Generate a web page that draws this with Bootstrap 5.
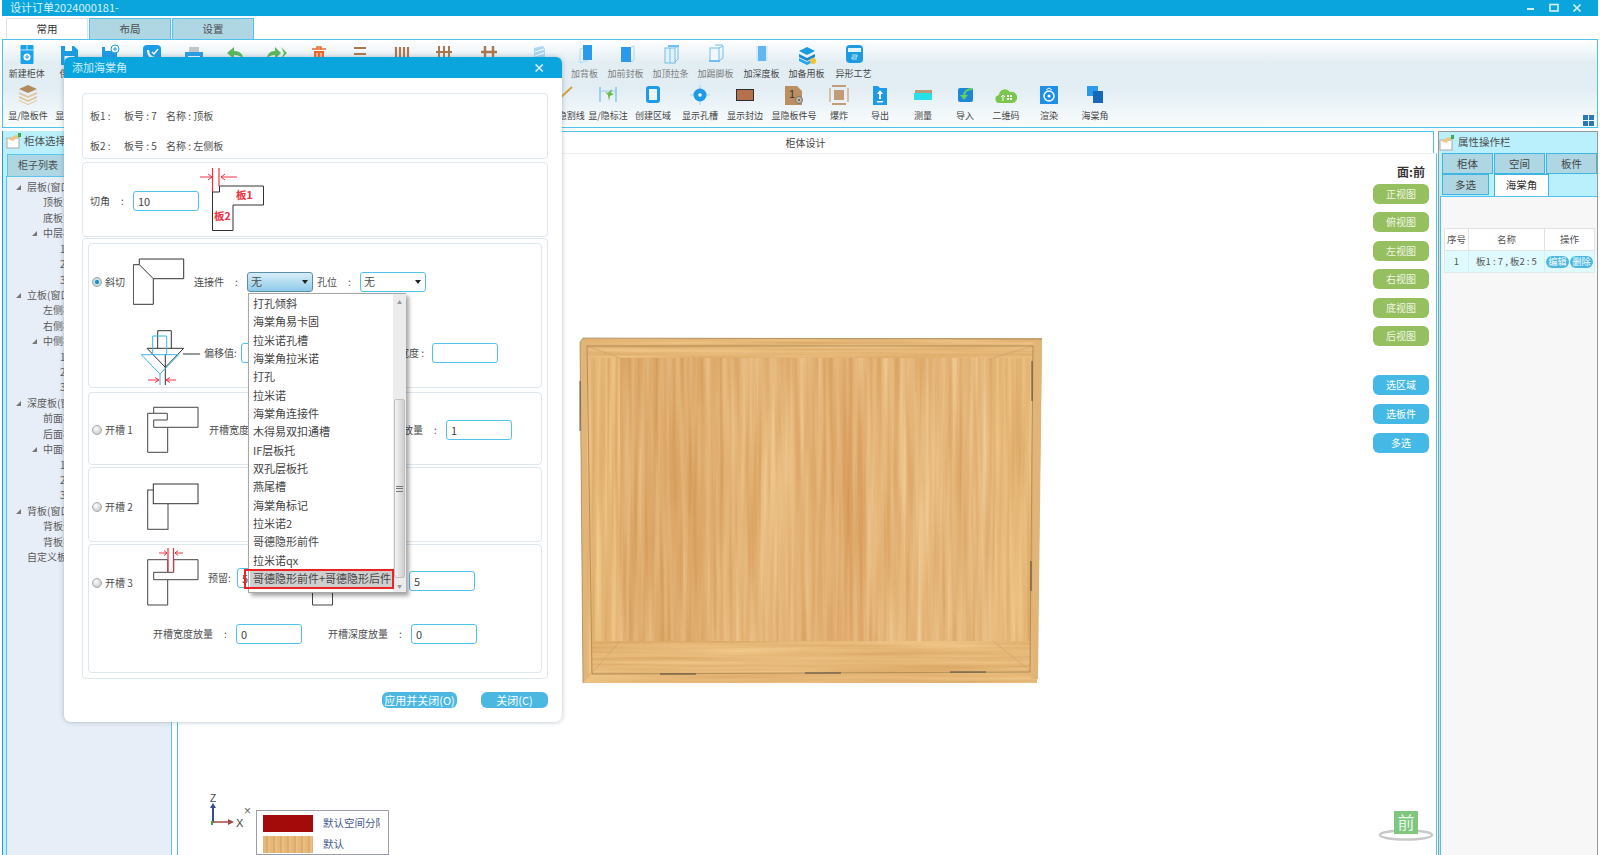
<!DOCTYPE html>
<html lang="zh-CN">
<head>
<meta charset="UTF-8">
<title>设计订单2024000181-</title>
<link rel="stylesheet" href="https://cdn.jsdelivr.net/npm/bootstrap@5.3.0/dist/css/bootstrap.min.css">
<script src="https://cdn.jsdelivr.net/npm/bootstrap@5.3.0/dist/js/bootstrap.bundle.min.js"></script>
<style>
body { width:1600px; height:855px; overflow:hidden; background:#fff; padding:0 2px; position:relative;
  font-family:"Noto Sans CJK SC","Liberation Sans",sans-serif; font-size:10px; color:#4d4d4d; line-height:1.2; }
/* title bar */
.title-bar { height:16px; background:#0aa5dc; color:#d8f2fb; font-size:11px; padding:0 16px 0 8px; }
.win-btns { gap:13px; }
/* ribbon tabs */
.main-tabs { height:23px; padding:2px 0 0 4px; border:0; gap:1px; flex-wrap:nowrap; }
.main-tabs .nav-link { width:82px; height:22px; padding:0; margin:0; font-size:10.5px; line-height:20px; text-align:center; color:#4d4d4d;
  background:#aed6e3; border:1px solid #4fc3ee; border-bottom:0; border-radius:0; }
.main-tabs .nav-link.active { background:#fff; color:#333; }
/* ribbon */
.ribbon { height:89px; border:1px solid #4fc3ee; padding-left:3px; position:relative;
  background:linear-gradient(#fff 0,#e3eef3 25%,#e2edf4 55%,#fafdfe 100%); }
.rib-row { height:42px; }
.rib-item { flex:none; display:flex; flex-direction:column; align-items:center; white-space:nowrap; font-size:9px; line-height:12px; color:#444; }
.rib-row1 .rib-item { padding-top:4px; }
.rib-row1 .rib-ttl { margin-top:2px; }
.rib-row2 .rib-item { padding-top:2px; }
.rib-row2 .rib-ttl { margin-top:4px; }
.rib-ico { width:22px; height:22px; flex:none; }
.faded { color:#7c7c7c; }
.rw36{width:36px}.rw38{width:38px}.rw40{width:40px}.rw417{width:41.7px}.rw42{width:42px}.rw44{width:44px}.rw46{width:46px}
.rw48{width:48px}.rw50{width:50px}.rw52{width:52px}.rw54{width:54px}.rib-spacer{width:443px;flex:none}
.rib-corner { position:absolute; right:3px; bottom:1px; width:11px; height:11px; }
/* panes */
.main-row { height:724px; margin-top:3px; }
.left-pane { width:170px; flex:none; background:#b9f0fb; border-left:1px solid #3d8fc9; display:flex; flex-direction:column; }
.pane-head { height:20px; padding-left:3px; gap:2px; font-size:10.5px; color:#4d4d4d; flex:none; }
.pane-ico { width:16px; height:16px; }
.left-tab { height:22px; width:62px; margin:3px 0 0 4px; background:#aed6e3; border:1px solid #5cc6ee; border-bottom:0; line-height:20px; text-align:center; font-size:10px; flex:none; }
.tree { flex:1; margin-left:3px; background:#e8eef7; border:1px solid #5cc6ee; border-bottom:0; padding-top:2px; overflow:hidden; }
.tree-row { height:15.43px; line-height:15.43px; font-size:10px; color:#5a5a5a; white-space:nowrap; }
.lv0 { padding-left:20px; } .lv1 { padding-left:36px; } .lv2 { padding-left:53px; } .lv-c { padding-left:9px; } .lv1c { padding-left:25px; }
.tree-tri { display:inline-block; width:0; height:0; border-left:5px solid transparent; border-bottom:5px solid #777; margin-right:6px; vertical-align:1px; }
.center-pane { width:1260px; flex:none; margin-left:5px; display:flex; flex-direction:column; }
.cv-tab { height:22px; flex:none; width:1257px; border:1px solid #4fc3ee; border-bottom:0; text-align:center; font-size:10px; line-height:21px; color:#444; }
.cv-body { flex:1; display:flex; border-left:1px solid #4fc3ee; border-right:1px solid #4fc3ee; border-top:1px solid #f0f0f0; }
.canvas-area { flex:1; position:relative; }
.wood-svg { position:absolute; left:400px; top:177px; width:470px; height:360px; }
.axis-svg { position:absolute; left:27px; top:636px; width:80px; height:45px; }
.legend-box { position:absolute; left:78px; top:656px; width:133px; height:45px; border:1px solid #9a9eab; background:#fff; padding:3px 6px; overflow:hidden; font-size:10.5px; color:#44598f; white-space:nowrap; }
.legend-row { height:18px; margin-bottom:3px; gap:10px; }
.legend-txt { width:57px; overflow:hidden; flex:none; }
.swatch { width:50px; height:17px; flex:none; }
.swatch-red { background:#a30b0b; }
.swatch-wood { background:repeating-linear-gradient(90deg,#e6b878 0 3px,#dfab6c 3px 5px,#e8bf84 5px 7px); }
.face-svg { position:absolute; left:1200px; top:654px; width:60px; height:34px; }
.view-col { width:63px; flex:none; padding:10px 7px 0 0; display:flex; flex-direction:column; align-items:stretch; }
.face-lbl { font-size:12px; font-weight:700; color:#333; text-align:right; padding-right:4px; margin-bottom:4px; line-height:16px; }
.vbtn { height:20px; padding:0; margin-bottom:8.4px; border:0; border-radius:6px; color:#eef6e4; font-size:10px; line-height:20px; flex:none; }
.vbtn-g { background:#96bf60; }
.vbtn-b { background:#45b9e5; color:#fff; margin-bottom:9px; }
.vgap { margin-top:21px; }
.right-pane { width:160px; flex:none; margin-left:1px; background:#b9f0fb; border:1px solid #999; border-bottom:0; display:flex; flex-direction:column; }
.rt-head { height:21px; padding-left:0; gap:3px; font-size:10.5px; flex:none; }
.rt-tabs { height:21px; margin-left:3px; flex:none; flex-wrap:nowrap; gap:1px; }
.rt-tabs .nav-link { height:21px; padding:0; font-size:10.5px; line-height:19px; text-align:center; color:#444; background:#aed6e3; border:1px solid #3fb5e3; border-radius:0; }
.rt-t51 { width:51px; } .rt-t47 { width:47px; margin-right:4px; } .rt-t55 { width:55px; }
.rt-tabs .nav-link.active { background:#fff; border-bottom:0; height:23px; color:#333; }
.rt-tabs2 { height:22px; }
.rt-body { flex:1; background:#f7f7f7; border:1px solid #4fc3ee; border-right:0; border-bottom:0; margin-left:1px; padding:31px 3px 0 3px; }
.prop-table { width:150px; margin:0; font-size:9.5px; table-layout:fixed; --bs-table-bg:transparent; }
.prop-table th, .prop-table td { padding:0; height:22px; text-align:center; vertical-align:middle; font-weight:400; color:#555; border:1px solid #e3e3e3; white-space:nowrap; }
.prop-table th { background:#fff; }
.prop-table td { background:#e0fbff; border-color:#dcebec; }
.col-a { width:24px; } .col-b { width:76px; } .col-c { width:50px; }
.pill-row { gap:1px; }
.pill-btn { height:12px; width:23px; padding:0; border:0; border-radius:6px; background:#4bb8e2; color:#fff; font-size:9px; line-height:12px; }
/* dialog */
.dlg { position:absolute; left:64px; top:57px; width:498px; height:665px; background:#fff; border-radius:7px; box-shadow:0 0 5px rgba(90,110,130,.45); z-index:5; }
.dlg-head { height:21px; background:#0aa5dc; color:#cfeefa; border-radius:6px 6px 0 0; padding:0 17px 0 8px; font-size:11px; }
.dlg-x { font-size:12px; line-height:12px; font-weight:700; color:#eaf8fd; }
.dlg-body { padding:15px 14px 0 18px; }
.sec { border:1px solid #dde7ee; border-radius:4px; }
.sec-info { height:66px; padding:7px 0 0 7px; margin-bottom:3px; }
.info-line { height:30px; line-height:30px; font-size:10px; }
.info-a { width:34px; } .info-b { width:42px; }
.sec-cut { height:75px; margin-bottom:1px; padding-left:7px; }
.cut-field { padding-top:3px; }
.cut-svg { width:66px; height:70px; margin-left:1px; }
.sec-modes { height:441px; padding:4px 5px 0 5px; }
.opt { border:1px solid #dde7ee; border-radius:4px; }
.opt1 { height:145px; margin-bottom:4px; padding-top:14px; }
.opt2 { height:73px; margin-bottom:2px; padding-top:3px; }
.opt3 { height:75px; margin-bottom:2px; padding-top:5px; }
.opt4 { height:129px; padding-top:1px; }
.opt-radio { flex:none; padding-left:3px; gap:3px; white-space:nowrap; font-size:10px; margin:0; }
.opt-a { width:44px; } .opt-b { width:58px; }
.opt-shift { margin-top:31px; align-self:flex-start; }
.radio-dot { width:10px; height:10px; margin:0; flex:none; float:none; border:1px solid #aaa; background:radial-gradient(circle at 40% 35%,#fff,#cfcfcf 70%,#b5b5b5); }
.radio-dot:checked { background-image:none; background:radial-gradient(circle,#1c8fc4 0 28%,#cfe2ea 45%,#aab6bc 100%); border-color:#9aa; }
.f-colon { width:3px; margin:0 9px 0 11px; flex:none; }
.f-input { width:66px; height:20px; flex:none; padding:0 4px; border:1px solid #4fc3ee; border-radius:3px; font-size:11px; font-family:inherit; color:#444; line-height:18px; min-height:0; }
.combo { width:66px; height:20px; flex:none; padding:0 4px 0 3px; border:1px solid #4fc3ee; border-radius:3px; background:#fff; font-size:11px; }
.combo-open { background:linear-gradient(#d7edf8,#8fcbe9); border-color:#5a8fa8; }
.combo-caret { width:0; height:0; border-left:3.5px solid transparent; border-right:3.5px solid transparent; border-top:4px solid #222; }
.mode-a { width:52px; height:47px; margin-left:0; flex:none; }
.mode-b { width:53px; height:50px; flex:none; }
.mode-c { width:53px; height:48px; flex:none; }
.mode-d { width:53px; height:60px; flex:none; }
.ml-9 { margin-left:9px; } .ml-4 { margin-left:4px; }
.row-b { margin-top:23px; padding-left:52px; }
.off-svg { width:60px; height:58px; flex:none; }
.off-field { margin-top:15px; align-self:flex-start; }
.off-lbl { margin-left:3px; width:37px; flex:none; }
.off-deg { margin-left:77px; width:40px; flex:none; }
.ml-94 { margin-left:94px; }
.field-3 { margin-left:8px; margin-top:22px; align-self:flex-start; }
.lbl-res { width:29px; flex:none; }
.small-d { width:21px; height:15px; margin:45px 0 0 9px; flex:none; align-self:flex-start; }
.input-5 { margin:25px 0 0 76px; align-self:flex-start; }
.row-c { margin-top:18px; padding-left:64px; }
.ml-26 { margin-left:26px; }
.dlg-foot { padding:13px 0 0 0; gap:24px; }
.dlg-btn { height:16px; padding:0; border:0; border-radius:6px; background:#4bb8e2; color:#fff; font-size:11px; line-height:16px; }
.btn-apply { width:75px; } .btn-close-c { width:67px; }
/* dropdown */
.combo-list.dropdown-menu { position:absolute; left:184px; top:236px; width:158px; height:300px; min-width:0; padding:0 0 0 1px; margin:0; border:1px solid #a7a7a7; border-radius:0; background:#fff; box-shadow:3px 3px 4px rgba(0,0,0,.35); display:flex; font-size:11px; z-index:8; }
.combo-items { width:143px; flex:none; }
.combo-items .dropdown-item { height:18.33px; line-height:18.33px; padding:0 0 0 3px; font-size:11px; color:#444; white-space:nowrap; position:relative; }
.combo-items .dropdown-item.picked { background:#cfcfcf; }
.pick-box { position:absolute; left:-6px; top:0; width:150px; height:20px; border:2px solid #ee2222; }
.combo-scroll { width:13px; flex:none; background:#ececec; display:flex; flex-direction:column; align-items:center; }
.sc-arrow { height:16px; flex:none; font-size:5px; line-height:16px; color:#999; }
.sc-space { height:89px; flex:none; }
.sc-thumb { width:11px; height:179px; flex:none; border:1px solid #c0c0c0; border-radius:2px; background:linear-gradient(90deg,#f4f4f4,#cdcdcd); display:flex; align-items:center; justify-content:center; }
.sc-grip { width:7px; height:6px; border-top:1px solid #777; border-bottom:1px solid #777; position:relative; }
.sc-grip::after { content:""; position:absolute; left:0; right:0; top:1.5px; height:1px; background:#777; }
</style>
</head>
<body>

<svg width="0" height="0" class="position-absolute">
  <defs>
    <filter id="grainV" x="0" y="0" width="100%" height="100%" color-interpolation-filters="sRGB">
      <feTurbulence type="fractalNoise" baseFrequency="0.17 0.005" numOctaves="3" seed="11"/>
      <feColorMatrix type="matrix" values="0.14 0 0 0 0.82  0.24 0 0 0 0.58  0.3 0 0 0 0.31  0 0 0 0 1"/>
    </filter>
    <filter id="grainH" x="0" y="0" width="100%" height="100%" color-interpolation-filters="sRGB">
      <feTurbulence type="fractalNoise" baseFrequency="0.006 0.25" numOctaves="2" seed="4"/>
      <feColorMatrix type="matrix" values="0.12 0 0 0 0.84  0.18 0 0 0 0.63  0.2 0 0 0 0.37  0 0 0 0 1"/>
    </filter>
    <filter id="grainS" x="0" y="0" width="100%" height="100%" color-interpolation-filters="sRGB">
      <feTurbulence type="fractalNoise" baseFrequency="0.25 0.006" numOctaves="2" seed="8"/>
      <feColorMatrix type="matrix" values="0.12 0 0 0 0.84  0.18 0 0 0 0.63  0.2 0 0 0 0.37  0 0 0 0 1"/>
    </filter>
    <linearGradient id="woodBands" x1="0" x2="1" y1="0" y2="0">
      <stop offset="0" stop-color="#b97a35" stop-opacity=".12"/>
      <stop offset=".2" stop-color="#c07a35" stop-opacity=".12"/>
      <stop offset=".38" stop-color="#fff0c0" stop-opacity=".06"/>
      <stop offset=".62" stop-color="#c8783a" stop-opacity=".14"/>
      <stop offset=".72" stop-color="#ffe9b8" stop-opacity=".06"/>
      <stop offset="1" stop-color="#ffeec6" stop-opacity=".08"/>
    </linearGradient>
  </defs>
</svg>

<div class="title-bar d-flex justify-content-between align-items-center">
  <span>设计订单2024000181-</span>
  <div class="win-btns d-flex align-items-center">
    <svg width="10" height="10" viewBox="0 0 10 10"><path d="M1 6h7" stroke="#d8f2fb" stroke-width="2"/></svg>
    <svg width="10" height="10" viewBox="0 0 10 10"><rect x="1" y="1.5" width="8" height="6.5" fill="none" stroke="#d8f2fb" stroke-width="1.6"/></svg>
    <svg width="10" height="10" viewBox="0 0 10 10"><path d="M1.5 1.5l7 7M8.5 1.5l-7 7" stroke="#d8f2fb" stroke-width="1.6"/></svg>
  </div>
</div>

<ul class="nav nav-tabs main-tabs">
  <li class="nav-item"><a class="nav-link active" href="#">常用</a></li>
  <li class="nav-item"><a class="nav-link" href="#">布局</a></li>
  <li class="nav-item"><a class="nav-link" href="#">设置</a></li>
</ul>

<div class="ribbon">
  <div class="rib-row rib-row1 d-flex">
    <div class="rib-item rw417"><svg class="rib-ico" viewBox="0 0 22 22"><rect x="4.500" y="1" width="13" height="19" rx="1" fill="#18a2ea"/><path d="M4.500 6h13M11 1v5" stroke="#fff" stroke-width=".7"/><circle cx="11" cy="13" r="3.500" fill="#fff"/><path d="M9 13h4M11 11v4" stroke="#18a2ea"/></svg><span class="rib-ttl">新建柜体</span></div>
    <div class="rib-item rw417"><svg class="rib-ico" viewBox="0 0 22 22"><path d="M3 2h13l4 4v15H3z" fill="#1a9de6"/><rect x="7" y="2" width="7" height="5" fill="#fff"/><rect x="6.500" y="12" width="10" height="9" fill="#fff"/></svg><span class="rib-ttl">保存</span></div>
    <div class="rib-item rw417"><svg class="rib-ico" viewBox="0 0 22 22"><path d="M3 3h11l4 4v14H3z" fill="#1a9de6"/><rect x="6" y="3" width="6" height="4" fill="#fff"/><rect x="6" y="13" width="9" height="8" fill="#fff"/><circle cx="16" cy="5" r="4" fill="#fff" stroke="#1a9de6"/><path d="M14 5h4M16 3v4" stroke="#1a9de6"/></svg></div>
    <div class="rib-item rw417"><svg class="rib-ico" viewBox="0 0 22 22"><rect x="2" y="1" width="18" height="18" rx="4" fill="#1a9de6"/><path d="M7 6c0 5 3 8 8 8" stroke="#fff" stroke-width="2.200" fill="none"/><path d="M11 8l2 2 4-5" stroke="#fff" stroke-width="1.500" fill="none"/></svg></div>
    <div class="rib-item rw417"><svg class="rib-ico" viewBox="0 0 22 22"><rect x="6" y="3" width="10" height="5" fill="#c3c6c8"/><rect x="2" y="8" width="18" height="9" fill="#2a9fe6"/><rect x="5" y="12" width="12" height="2" fill="#fff"/></svg></div>
    <div class="rib-item rw417"><svg class="rib-ico" viewBox="0 0 22 22"><path d="M3 9l7-6v4c6 0 9 3 9 8-2-3-5-4-9-4v4z" fill="#5bb85c"/></svg></div>
    <div class="rib-item rw417"><svg class="rib-ico" viewBox="0 0 22 22"><path d="M15 9L9 3v4C4 7 1 10 1 15c2-3 4-4 8-4v4z" fill="#5bb85c"/><path d="M15 3l6 6-6 6 3-6z" fill="#5bb85c"/></svg></div>
    <div class="rib-item rw417"><svg class="rib-ico" viewBox="0 0 22 22"><path d="M6 7h10v12H6z" fill="#ea6a2c"/><path d="M4 5h14M9 5V3h4v2" stroke="#ea6a2c" stroke-width="1.500" fill="none"/><path d="M9 9v8M13 9v8" stroke="#fff"/></svg></div>
    <div class="rib-item rw417"><svg class="rib-ico" viewBox="0 0 22 22"><path d="M5 4h12M5 10h12M5 16h12" stroke="#a8784f" stroke-width="2.200"/></svg></div>
    <div class="rib-item rw417"><svg class="rib-ico" viewBox="0 0 22 22"><path d="M5 3v15M9 3v15M13 3v15M17 3v15" stroke="#a8784f" stroke-width="2.200"/></svg></div>
    <div class="rib-item rw417"><svg class="rib-ico" viewBox="0 0 22 22"><path d="M6 2v18M11 2v18M16 2v18M3 8h16M3 14h16" stroke="#a8784f" stroke-width="2"/></svg></div>
    <div class="rib-item rw48"><svg class="rib-ico" viewBox="0 0 22 22"><path d="M7 2v18M15 2v18M3 8h16" stroke="#a8784f" stroke-width="2.400"/></svg></div>
    <div class="rib-item rw52"><svg class="rib-ico" viewBox="0 0 22 22"><path d="M6 4l9-2 2 3v12l-9 3-2-3z" fill="#a9d8f5"/><path d="M7 8l9-3M7 12l9-3" stroke="#fff"/></svg></div>
    <div class="rib-item rw40"><svg class="rib-ico" viewBox="0 0 22 22"><path d="M6 5l8-3v14l-8 3z" fill="none" stroke="#a9d8f5"/><rect x="9" y="1" width="9" height="15" fill="#2c9aea"/></svg><span class="rib-ttl faded">加背板</span></div>
    <div class="rib-item rw42"><svg class="rib-ico" viewBox="0 0 22 22"><rect x="6" y="3" width="10" height="15" fill="#2c9aea"/><path d="M16 3l3-1v14l-3 2" fill="none" stroke="#a9d8f5"/></svg><span class="rib-ttl faded">加前封板</span></div>
    <div class="rib-item rw48"><svg class="rib-ico" viewBox="0 0 22 22"><rect x="5" y="4" width="10" height="15" fill="#e3f3fd" stroke="#72bef0"/><path d="M15 4l3-2v13l-3 3" fill="none" stroke="#72bef0"/><rect x="8" y="1" width="11" height="2" fill="#72bef0"/><path d="M10 4v15" stroke="#72bef0"/></svg><span class="rib-ttl faded">加顶拉条</span></div>
    <div class="rib-item rw42"><svg class="rib-ico" viewBox="0 0 22 22"><rect x="5" y="4" width="9" height="13" fill="#f0f8fe" stroke="#72bef0"/><path d="M14 4l4-2v12l-4 3M10 1h8" fill="none" stroke="#72bef0"/><rect x="4" y="16" width="11" height="2" fill="#72bef0"/></svg><span class="rib-ttl faded">加踢脚板</span></div>
    <div class="rib-item rw50"><svg class="rib-ico" viewBox="0 0 22 22"><rect x="7" y="2" width="8" height="15" fill="#62b7f2"/><path d="M6 2v15M16 2v15" stroke="#bfe2f8"/></svg><span class="rib-ttl">加深度板</span></div>
    <div class="rib-item rw40"><svg class="rib-ico" viewBox="0 0 22 22"><path d="M11 3l8 4-8 4-8-4z" fill="#1c9ae2"/><path d="M3 10l8 4 8-4v3l-8 4-8-4z" fill="#1487cf"/><path d="M3 14l8 4 6-3v3l-6 3-8-4z" fill="#21a7ea"/><circle cx="17" cy="17" r="3" fill="#f2c232"/></svg><span class="rib-ttl">加备用板</span></div>
    <div class="rib-item rw54"><svg class="rib-ico" viewBox="0 0 22 22"><rect x="3" y="1" width="17" height="18" rx="4" fill="#1c9ae2"/><rect x="5" y="4" width="13" height="4" fill="#e3f4fd"/><path d="M9 11h5v2H9v2h5" stroke="#bfe6fa" fill="none"/></svg><span class="rib-ttl">异形工艺</span></div>
  </div>
  <div class="rib-row rib-row2 d-flex">
    <div class="rib-item rw44"><svg class="rib-ico" viewBox="0 0 22 22"><path d="M11 1l9 4-9 4-9-4z" fill="#b38a5e"/><path d="M2 8l9 4 9-4v2l-9 4-9-4zM2 12l9 4 9-4v2l-9 4-9-4zM2 16l9 4 9-4v1l-9 4-9-4z" fill="#e2c59c"/></svg><span class="rib-ttl">显/隐板件</span></div>
    <div class="rib-item rw50"><svg class="rib-ico" viewBox="0 0 22 22"><rect x="4" y="4" width="14" height="14" fill="#a9d8f5"/></svg><span class="rib-ttl">显/隐门板</span></div>
    <div class="rib-spacer"></div>
    <div class="rib-item rw44"><svg class="rib-ico" viewBox="0 0 22 22"><path d="M4 16L18 3" stroke="#d9a13c" stroke-width="2"/></svg><span class="rib-ttl">显/隐割线</span></div>
    <div class="rib-item rw42"><svg class="rib-ico" viewBox="0 0 22 22"><path d="M3 3v15M19 3v15" stroke="#4fb4ee"/><path d="M3 7h16" stroke="#8cd0f2"/><path d="M15 5l-4 4-3-1 3 3 1 6 1-5 4-2-3-1z" fill="#66bb45"/></svg><span class="rib-ttl">显/隐标注</span></div>
    <div class="rib-item rw48"><svg class="rib-ico" viewBox="0 0 22 22"><rect x="4" y="2" width="14" height="17" rx="3" fill="#1e9be8"/><rect x="7" y="5" width="8" height="11" fill="#eaf6fd"/></svg><span class="rib-ttl">创建区域</span></div>
    <div class="rib-item rw46"><svg class="rib-ico" viewBox="0 0 22 22"><path d="M1 11h20M11 1v20" stroke="#9fdcf7" stroke-width="1.200"/><circle cx="11" cy="11" r="6.500" fill="#1e9be8"/><circle cx="11" cy="11" r="1.800" fill="#fff"/></svg><span class="rib-ttl">显示孔槽</span></div>
    <div class="rib-item rw44"><svg class="rib-ico" viewBox="0 0 22 22"><rect x="2.500" y="5.500" width="17" height="11" fill="#b5714d" stroke="#2e2e2e"/></svg><span class="rib-ttl">显示封边</span></div>
    <div class="rib-item rw54"><svg class="rib-ico" viewBox="0 0 22 22"><path d="M2 2h12l5 5v14H2z" fill="#bb8f62"/><text x="6" y="14" font-size="11" font-family="Liberation Sans" fill="#333">1</text><circle cx="16" cy="16" r="3.500" fill="#bfb5a8" stroke="#7d7467"/><circle cx="16" cy="16" r="1" fill="#555"/></svg><span class="rib-ttl">显隐板件号</span></div>
    <div class="rib-item rw36"><svg class="rib-ico" viewBox="0 0 22 22"><rect x="6" y="6" width="10" height="10" fill="#c29c76"/><path d="M4 1h14v2H4zM4 19h14v2H4z" fill="#c29c76"/><path d="M1 4h2v14H1zM19 4h2v14h-2z" fill="#d6bfa6"/></svg><span class="rib-ttl">爆炸</span></div>
    <div class="rib-item rw46"><svg class="rib-ico" viewBox="0 0 22 22"><path d="M4 2h5l2 2h7v17H4z" fill="#1e9be8"/><path d="M11 6l3 4h-2v5h-2v-5H8zM8 17h6v1.500H8z" fill="#fff"/></svg><span class="rib-ttl">导出</span></div>
    <div class="rib-item rw40"><svg class="rib-ico" viewBox="0 0 22 22"><rect x="3" y="6" width="17" height="3" fill="#b79c7a"/><rect x="2" y="9" width="18" height="7" fill="#28e0ea"/></svg><span class="rib-ttl">测量</span></div>
    <div class="rib-item rw44"><svg class="rib-ico" viewBox="0 0 22 22"><rect x="4" y="4" width="15" height="14" rx="2" fill="#1d86d6"/><path d="M18 5c-5 0-8 3-8 7" stroke="#62d25a" stroke-width="2" fill="none"/><path d="M6 11h8l-4 5z" fill="#62d25a"/></svg><span class="rib-ttl">导入</span></div>
    <div class="rib-item rw38"><svg class="rib-ico" viewBox="0 0 22 22"><path d="M5 19a4 4 0 0 1-1-8 6 6 0 0 1 11-3 5 5 0 0 1 3 11z" fill="#7bc74d"/><path d="M8 17v-6M6 13l2-2 2 2" stroke="#fff" fill="none"/><path d="M12 11h2v2h-2zM15 11h2v2h-2zM12 14h2v2h-2zM15 14h2v2h-2z" fill="#fff"/></svg><span class="rib-ttl">二维码</span></div>
    <div class="rib-item rw48"><svg class="rib-ico" viewBox="0 0 22 22"><rect x="2" y="2" width="18" height="18" fill="#1d8fe6"/><circle cx="11" cy="12" r="5" fill="none" stroke="#fff" stroke-width="1.500"/><path d="M8 6l3-2 3 2" stroke="#fff" fill="none"/><circle cx="11" cy="12" r="1.500" fill="#fff"/></svg><span class="rib-ttl">渲染</span></div>
    <div class="rib-item rw44"><svg class="rib-ico" viewBox="0 0 22 22"><rect x="3" y="2" width="11" height="10" fill="#2a9be8"/><rect x="9" y="7" width="10" height="12" fill="#1668b8"/></svg><span class="rib-ttl">海棠角</span></div>
  </div>
  <svg class="rib-corner" viewBox="0 0 11 11"><path d="M0 0h5v5H0zM6 0h5v5H6zM0 6h5v5H0zM6 6h5v5H6z" fill="#2a78b8"/></svg>
</div>

<div class="main-row d-flex">
  <aside class="left-pane">
    <div class="pane-head d-flex align-items-center">
      <svg class="pane-ico" viewBox="0 0 16 16"><rect x="1" y="5" width="12" height="10" fill="#fff" stroke="#aaa"/><path d="M2 6l8-4 3 1-6 5z" fill="#eec583"/><rect x="12" y="0" width="3" height="4" fill="#3dab48"/></svg>
      <span>柜体选择栏</span>
    </div>
    <div class="left-tab">柜子列表</div>
    <div class="tree">
      <div class="tree-row lv-c"><i class="tree-tri"></i>层板(窗口1)</div>
      <div class="tree-row lv1">顶板*</div>
      <div class="tree-row lv1">底板*</div>
      <div class="tree-row lv1c"><i class="tree-tri"></i>中层板</div>
      <div class="tree-row lv2">1</div>
      <div class="tree-row lv2">2</div>
      <div class="tree-row lv2">3</div>
      <div class="tree-row lv-c"><i class="tree-tri"></i>立板(窗口1)</div>
      <div class="tree-row lv1">左侧板</div>
      <div class="tree-row lv1">右侧板</div>
      <div class="tree-row lv1c"><i class="tree-tri"></i>中侧板</div>
      <div class="tree-row lv2">1</div>
      <div class="tree-row lv2">2</div>
      <div class="tree-row lv2">3</div>
      <div class="tree-row lv-c"><i class="tree-tri"></i>深度板(窗口1)</div>
      <div class="tree-row lv1">前面板</div>
      <div class="tree-row lv1">后面板</div>
      <div class="tree-row lv1c"><i class="tree-tri"></i>中面板</div>
      <div class="tree-row lv2">1</div>
      <div class="tree-row lv2">2</div>
      <div class="tree-row lv2">3</div>
      <div class="tree-row lv-c"><i class="tree-tri"></i>背板(窗口1)</div>
      <div class="tree-row lv1">背板开槽</div>
      <div class="tree-row lv1">背板拉条</div>
      <div class="tree-row lv0">自定义板</div>
    </div>
  </aside>

  <main class="center-pane">
    <div class="cv-tab">柜体设计</div>
    <div class="cv-body">
      <div class="canvas-area">
        <svg class="wood-svg" viewBox="578 330 470 360">
          <polygon points="583,337 1042,338 1037,678 583,682 580,341" fill="#dfb274"/>
          <g filter="url(#grainH)"><polygon points="583,337 1042,338 1042,345 583,345"/></g>
          <g filter="url(#grainH)"><polygon points="583,673 1031,671 1037,678 583,682"/></g>
          <path d="M580 341h7l5 332-9 9zM1033 338h9l-4 340h-7z" fill="#e0b577"/>
          <g filter="url(#grainS)"><polygon points="587,345 620,357 620,640 592,672"/></g>
          <g filter="url(#grainS)"><polygon points="1033,345 993,357 993,640 1030,670"/></g>
          <g filter="url(#grainH)"><polygon points="587,345 1033,345 993,357 620,357"/></g>
          <g filter="url(#grainH)"><polygon points="620,640 993,640 1030,670 592,672"/></g>
          <g filter="url(#grainV)"><rect x="620" y="357" width="373" height="283"/></g>
          <rect x="620" y="357" width="373" height="283" fill="url(#woodBands)"/>
          <path d="M587 345L620 357M1033 345L993 357M592 672L620 640M1030 670L993 640" stroke="#c99d66" stroke-width=".6"/>
          <path d="M587 345H1033L1030 671L592 673Z" fill="none" stroke="#a48556" stroke-width=".8"/>
          <path d="M583 337L1042 338M580 341L583 337M580 341L583 682" stroke="#8d7a5c" stroke-width=".6"/>
          <path d="M660 673h36M805 672h36M950 671h36M1032 360v40M1031 560v30M580 380v50" stroke="#333" stroke-width=".8"/>
        </svg>
        <svg class="axis-svg" viewBox="205 789 80 45">
          <text x="210" y="801" font-size="10" fill="#444" font-family="Liberation Sans">Z</text>
          <path d="M213 822V805" stroke="#3a4a9c" stroke-width="2"/><path d="M210 807l3-5 3 5z" fill="#3a4a9c"/>
          <path d="M213 821h17" stroke="#a24a48" stroke-width="1.500"/><path d="M228 818l6 3-6 3z" fill="#a24a48"/>
          <path d="M212 820v4" stroke="#3fa44a" stroke-width="2"/>
          <text x="236" y="826" font-size="11" fill="#444" font-family="Liberation Sans">X</text>
          <text x="244" y="814" font-size="12" fill="#666" font-family="Liberation Sans">×</text>
        </svg>
        <div class="legend-box">
          <div class="legend-row d-flex align-items-center"><span class="swatch swatch-red"></span><span class="legend-txt">默认空间分隔</span></div>
          <div class="legend-row d-flex align-items-center"><span class="swatch swatch-wood"></span><span>默认</span></div>
        </div>
        <svg class="face-svg" viewBox="0 0 60 34">
          <ellipse cx="28" cy="27" rx="26" ry="4.500" fill="none" stroke="#c9c9c9" stroke-width="2.500"/>
          <rect x="16" y="3" width="24" height="23" fill="#7fc67f"/>
          <text x="28" y="21" text-anchor="middle" font-size="17" fill="#e8f6e8" font-family="Noto Sans CJK SC">前</text>
        </svg>
      </div>
      <div class="view-col">
        <div class="face-lbl">面:前</div>
        <button class="btn vbtn vbtn-g">正视图</button>
        <button class="btn vbtn vbtn-g">俯视图</button>
        <button class="btn vbtn vbtn-g">左视图</button>
        <button class="btn vbtn vbtn-g">右视图</button>
        <button class="btn vbtn vbtn-g">底视图</button>
        <button class="btn vbtn vbtn-g">后视图</button>
        <button class="btn vbtn vbtn-b vgap">选区域</button>
        <button class="btn vbtn vbtn-b">选板件</button>
        <button class="btn vbtn vbtn-b">多选</button>
      </div>
    </div>
  </main>

  <aside class="right-pane">
    <div class="rt-head d-flex align-items-center">
      <svg class="pane-ico" viewBox="0 0 16 16"><rect x="1" y="5" width="12" height="10" fill="#fff" stroke="#aaa"/><path d="M2 6l8-4 3 1-6 5z" fill="#eec583"/><rect x="12" y="0" width="3" height="4" fill="#3dab48"/></svg>
      <span>属性操作栏</span>
    </div>
    <ul class="nav rt-tabs">
      <li><a class="nav-link rt-t51" href="#">柜体</a></li>
      <li><a class="nav-link rt-t51" href="#">空间</a></li>
      <li><a class="nav-link rt-t51" href="#">板件</a></li>
    </ul>
    <ul class="nav rt-tabs rt-tabs2">
      <li><a class="nav-link rt-t47" href="#">多选</a></li>
      <li><a class="nav-link rt-t55 active" href="#">海棠角</a></li>
    </ul>
    <div class="rt-body">
      <table class="table prop-table">
        <thead><tr><th class="col-a">序号</th><th class="col-b">名称</th><th class="col-c">操作</th></tr></thead>
        <tbody><tr>
          <td>1</td><td>板1 : 7 , 板2 : 5</td>
          <td><div class="pill-row d-flex justify-content-center"><button class="btn pill-btn">编辑</button><button class="btn pill-btn">删除</button></div></td>
        </tr></tbody>
      </table>
    </div>
  </aside>
</div>

<div class="dlg">
  <div class="dlg-head d-flex justify-content-between align-items-center">
    <span>添加海棠角</span><span class="dlg-x">×</span>
  </div>
  <div class="dlg-body">
    <div class="sec sec-info">
      <div class="info-line d-flex"><span class="info-a">板1 :</span><span class="info-b">板号 : 7</span><span>名称 : 顶板</span></div>
      <div class="info-line d-flex"><span class="info-a">板2 :</span><span class="info-b">板号 : 5</span><span>名称 : 左侧板</span></div>
    </div>
    <div class="sec sec-cut d-flex align-items-center">
      <div class="cut-field d-flex align-items-center">
        <span>切角</span><span class="f-colon">:</span><input class="form-control f-input" value="10">
      </div>
      <svg class="cut-svg" viewBox="200 165 66 70">
        <path d="M212.500 192h7v-6h44v19h-30.500v25.500h-20.500z" fill="#fff" stroke="#333" stroke-width="1"/>
        <path d="M212.500 168v24M219 168v18" stroke="#f03040" stroke-width="1.200"/>
        <path d="M200 177h12M208 174l4 3-4 3M221 177h16M225 174l-4 3 4 3" stroke="#f03040" fill="none"/>
        <text x="236" y="199" font-size="10.500" font-weight="700" fill="#f03040" font-family="Noto Sans CJK SC">板1</text>
        <text x="214" y="220" font-size="10.500" font-weight="700" fill="#f03040" font-family="Noto Sans CJK SC">板2</text>
      </svg>
    </div>
    <div class="sec sec-modes">
      <div class="opt opt1">
        <div class="d-flex align-items-center">
          <label class="opt-radio opt-a d-flex align-items-center"><input class="form-check-input radio-dot" type="radio" name="mode" checked>斜切</label>
          <svg class="mode-a" viewBox="133 260 52 47"><path d="M139.300 261h44.400v19.700h-30.400v25.600h-20v-39.600h6zM139.300 266.700l14 14" fill="#fff" stroke="#333" stroke-width="1"/></svg>
          <span class="ml-9">连接件</span><span class="f-colon">:</span>
          <div class="combo combo-open d-flex justify-content-between align-items-center"><span>无</span><i class="combo-caret"></i></div>
          <span class="ml-4">孔位</span><span class="f-colon">:</span>
          <div class="combo d-flex justify-content-between align-items-center"><span>无</span><i class="combo-caret"></i></div>
        </div>
        <div class="row-b d-flex">
          <svg class="off-svg" viewBox="140 328 60 58">
            <path d="M156.700 348.300v-17.600h13.600v17.600M146 348.300h36.700l-18.400 19z" fill="none" stroke="#333"/>
            <path d="M182 354h17M164.300 354v31" stroke="#333"/>
            <path d="M151.700 355v-19h14v19M140.300 354.700h37.400L159 374zM159 374v11" fill="none" stroke="#3fb4e6"/>
            <path d="M147 380h11M154 377.500l4 2.500-4 2.500M165 380h10M169 377.500l-4 2.500 4 2.500" fill="none" stroke="#f03040"/>
          </svg>
          <div class="off-field d-flex align-items-center">
            <span class="off-lbl">偏移值:</span>
            <input class="form-control f-input" value="">
            <span class="off-deg text-end me-2">宽度 :</span>
            <input class="form-control f-input" value="">
          </div>
        </div>
      </div>
      <div class="opt opt2 d-flex align-items-center align-self-stretch">
        <label class="opt-radio opt-b d-flex align-items-center"><input class="form-check-input radio-dot" type="radio" name="mode">开槽 1</label>
        <svg class="mode-b" viewBox="147 406 53 50"><path d="M147.700 414.300h6v-6H198v20h-30.300v25h-20zM153.700 414.300h13.600v6.700h-13.600v7.300h14" fill="#fff" stroke="#444" stroke-width="1"/></svg>
        <span class="ml-9">开槽宽度放量</span>
        <span class="ml-94">开槽深度放量</span><span class="f-colon">:</span>
        <input class="form-control f-input" value="1">
      </div>
      <div class="opt opt3 d-flex align-items-center">
        <label class="opt-radio opt-b d-flex align-items-center"><input class="form-check-input radio-dot" type="radio" name="mode">开槽 2</label>
        <svg class="mode-c" viewBox="147 484 53 48"><rect x="147.700" y="491" width="20.300" height="39.300" fill="#fff" stroke="#444"/><rect x="153.300" y="485" width="44.700" height="19.700" fill="#fff" stroke="#333"/></svg>
      </div>
      <div class="opt opt4">
        <div class="d-flex">
          <label class="opt-radio opt-b opt-shift d-flex align-items-center"><input class="form-check-input radio-dot" type="radio" name="mode">开槽 3</label>
          <svg class="mode-d" viewBox="147 548 53 60">
            <path d="M147.700 561.700h20v12.600h-14v7.400h14V607h-20zM173.700 561.700H198v20h-30.300M173.700 561.700v12.600h-6" fill="#fff" stroke="#444"/>
            <path d="M168 550v24M173.500 550v24" stroke="#f03040" stroke-width="1.200"/>
            <path d="M159 555h8M164 552.500l3 2.500-3 2.500M175 555h8M178 552.500l-3 2.500 3 2.500" fill="none" stroke="#f03040"/>
          </svg>
          <div class="field-3 d-flex align-items-center">
            <span class="lbl-res">预留:</span>
            <input class="form-control f-input" value="5">
          </div>
          <svg class="small-d" viewBox="311 593 21 15"><path d="M311.500 593v14h20v-14" fill="none" stroke="#444"/></svg>
          <input class="form-control f-input input-5" value="5">
        </div>
        <div class="row-c d-flex align-items-center">
          <span>开槽宽度放量</span><span class="f-colon">:</span><input class="form-control f-input" value="0">
          <span class="ml-26">开槽深度放量</span><span class="f-colon">:</span><input class="form-control f-input" value="0">
        </div>
      </div>
    </div>
    <div class="dlg-foot d-flex justify-content-end">
      <button class="btn dlg-btn btn-apply">应用并关闭(O)</button>
      <button class="btn dlg-btn btn-close-c">关闭(C)</button>
    </div>
  </div>

  <div class="dropdown-menu show combo-list">
    <div class="combo-items">
      <a class="dropdown-item" href="#">打孔倾斜</a>
      <a class="dropdown-item" href="#">海棠角易卡固</a>
      <a class="dropdown-item" href="#">拉米诺孔槽</a>
      <a class="dropdown-item" href="#">海棠角拉米诺</a>
      <a class="dropdown-item" href="#">打孔</a>
      <a class="dropdown-item" href="#">拉米诺</a>
      <a class="dropdown-item" href="#">海棠角连接件</a>
      <a class="dropdown-item" href="#">木得易双扣通槽</a>
      <a class="dropdown-item" href="#">IF层板托</a>
      <a class="dropdown-item" href="#">双孔层板托</a>
      <a class="dropdown-item" href="#">燕尾槽</a>
      <a class="dropdown-item" href="#">海棠角标记</a>
      <a class="dropdown-item" href="#">拉米诺2</a>
      <a class="dropdown-item" href="#">哥德隐形前件</a>
      <a class="dropdown-item" href="#">拉米诺qx</a>
      <a class="dropdown-item picked" href="#">哥德隐形前件+哥德隐形后件<span class="pick-box"></span></a>
    </div>
    <div class="combo-scroll">
      <span class="sc-arrow">▲</span>
      <div class="sc-space"></div>
      <div class="sc-thumb"><i class="sc-grip"></i></div>
      <span class="sc-arrow">▼</span>
    </div>
  </div>
</div>

</body>
</html>
